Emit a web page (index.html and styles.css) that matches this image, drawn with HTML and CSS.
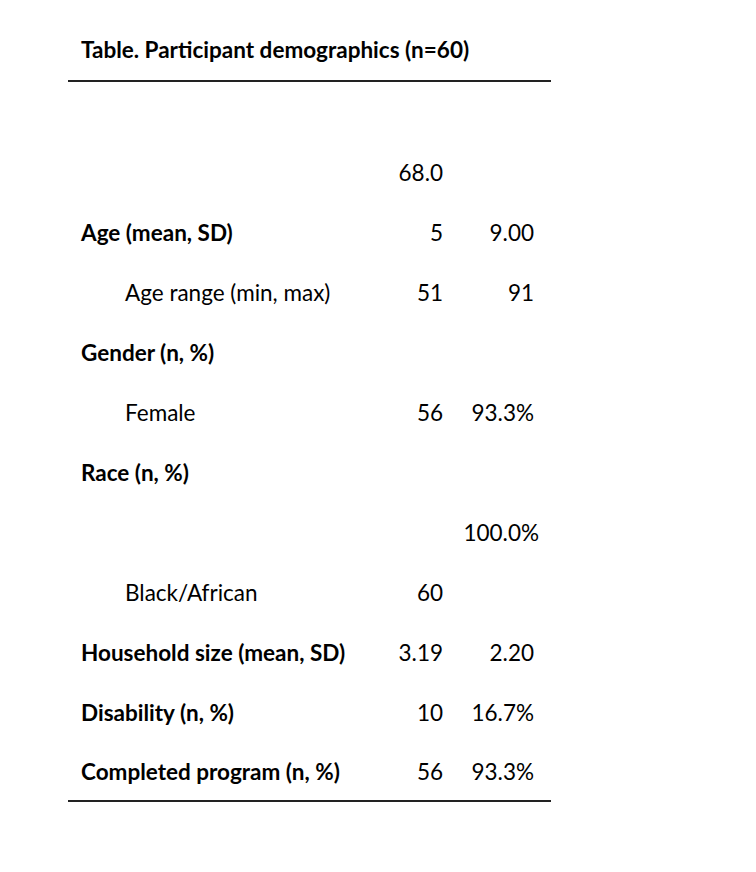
FILE: index.html
```html
<!DOCTYPE html>
<html lang="en">
<head>
<meta charset="utf-8">
<title>Participant demographics</title>
<link rel="stylesheet" href="styles.css">
</head>
<body>
<div class="doc">
  <div class="title">Table. Participant demographics (n=60)</div>
  <div class="table">
    <div class="row rule-top"><div class="c1"></div><div class="c2"></div><div class="c3"></div></div>
    <div class="row"><div class="c1"></div><div class="c2">68.0</div><div class="c3"></div></div>
    <div class="row"><div class="c1 b">Age (mean, SD)</div><div class="c2">5</div><div class="c3">9.00</div></div>
    <div class="row"><div class="c1 ind">Age range (min, max)</div><div class="c2">51</div><div class="c3">91</div></div>
    <div class="row"><div class="c1 b">Gender (n, %)</div><div class="c2"></div><div class="c3"></div></div>
    <div class="row"><div class="c1 ind">Female</div><div class="c2">56</div><div class="c3">93.3%</div></div>
    <div class="row"><div class="c1 b">Race (n, %)</div><div class="c2"></div><div class="c3"></div></div>
    <div class="row"><div class="c1"></div><div class="c2"></div><div class="c3 wide">100.0%</div></div>
    <div class="row"><div class="c1 ind">Black/African</div><div class="c2">60</div><div class="c3"></div></div>
    <div class="row"><div class="c1 b">Household size (mean, SD)</div><div class="c2">3.19</div><div class="c3">2.20</div></div>
    <div class="row"><div class="c1 b">Disability (n, %)</div><div class="c2">10</div><div class="c3">16.7%</div></div>
    <div class="row rule-bottom"><div class="c1 b">Completed program (n, %)</div><div class="c2">56</div><div class="c3">93.3%</div></div>
  </div>
</div>
</body>
</html>
```
FILE: styles.css
```css
html, body {
  margin: 0;
  padding: 0;
  background: #ffffff;
}
body {
  font-family: "Lato", "Open Sans", "Liberation Sans", sans-serif;
  font-size: 22.5px;
  color: #000000;
}
.doc {
  padding-left: 68px;
  width: 483px;
}
.title {
  height: 80px;
  box-sizing: border-box;
  padding-left: 13px;
  padding-top: 37px;
  line-height: 26px;
  font-weight: 700;
}
.table {
  display: flex;
  flex-direction: column;
}
.row {
  display: grid;
  grid-template-columns: 314px 76px 93px;
  height: 60px;
  align-items: center;
}
.row > div {
  height: 100%;
  display: flex;
  align-items: center;
  box-sizing: border-box;
  white-space: nowrap;
}
.rule-top {
  height: 62px;
}
.rule-top > div {
  border-top: 2px solid #222222;
  height: 62px;
}
.rule-bottom > div {
  border-bottom: 2px solid #222222;
}
.c1 {
  padding-left: 13px;
}
.c1.ind {
  padding-left: 57px;
}
.b {
  font-weight: 700;
}
.c2 {
  justify-content: flex-end;
  padding-right: 15px;
}
.c3 {
  justify-content: flex-end;
  padding-right: 17px;
}
.c3.wide {
  padding-right: 12px;
}
```
